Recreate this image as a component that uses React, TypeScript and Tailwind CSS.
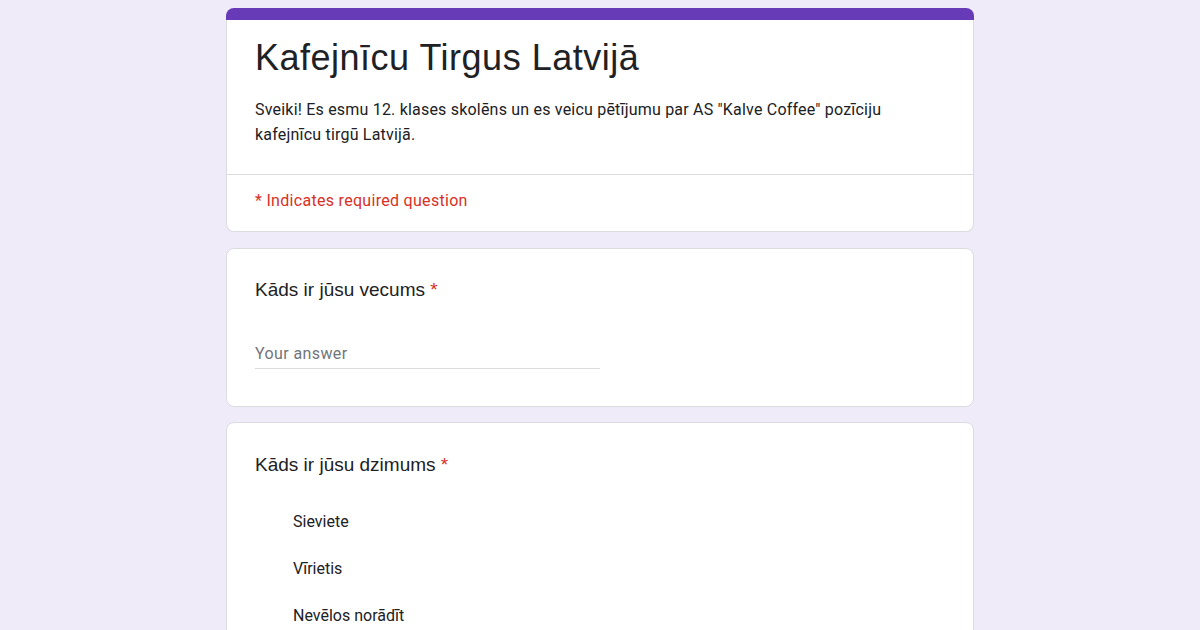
import React from "react";

const roboto = { fontFamily: "Roboto, 'Noto Sans', sans-serif" };

function Card({ children, className = "" }: { children: React.ReactNode; className?: string }) {
  return (
    <div className={"w-[748px] mx-auto bg-white border border-[#dadce0] rounded-lg " + className}>
      {children}
    </div>
  );
}

export default function App() {
  return (
    <div className="w-[1200px] h-[630px] overflow-hidden bg-[#f0ebf8] pt-[8px]">
      {/* Header card */}
      <div className="w-[748px] mx-auto">
        <div className="h-[12px] bg-[#673ab7] rounded-t-lg" />
        <div className="bg-white border-x border-b border-[#dadce0] rounded-b-lg">
          <div className="px-[28px] pt-[18px] pb-[27px]">
            <h1 className="text-[36px] leading-[40px] text-[#202124] tracking-[0.5px] font-['Liberation_Sans',Arial,sans-serif]">
              Kafejnīcu Tirgus Latvijā
            </h1>
            <p className="mt-[19px] text-[16px] leading-[25px] tracking-[0.2px] text-[#202124]" style={roboto}>
              Sveiki! Es esmu 12. klases skolēns un es veicu pētījumu par AS "Kalve Coffee" pozīciju
              <br />
              kafejnīcu tirgū Latvijā.
            </p>
          </div>
          <div className="border-t border-[#dadce0] px-[28px] pt-[16px] pb-[20px]">
            <p className="text-[16px] leading-[20px] tracking-[0.3px] text-[#d93025]" style={roboto}>
              * Indicates required question
            </p>
          </div>
        </div>
      </div>

      {/* Question 1 */}
      <Card className="mt-[16px] px-[28px] pt-[29px] pb-[37px]">
        <div className="text-[19px] leading-[24px] text-[#202124] font-['Liberation_Sans',Arial,sans-serif]">
          Kāds ir jūsu vecums <span className="text-[#d93025]">*</span>
        </div>
        <div className="mt-[40px] w-1/2 border-b border-[#dadce0] pb-[2px]">
          <div className="text-[16px] leading-[24px] tracking-[0.4px] text-[#70757a]" style={roboto}>
            Your answer
          </div>
        </div>
      </Card>

      {/* Question 2 */}
      <Card className="mt-[15px] px-[28px] pt-[30px] pb-[20px]">
        <div className="text-[19px] leading-[24px] text-[#202124] font-['Liberation_Sans',Arial,sans-serif]">
          Kāds ir jūsu dzimums <span className="text-[#d93025]">*</span>
        </div>
        <div className="mt-[21px] flex flex-col">
          {["Sieviete", "Vīrietis", "Nevēlos norādīt"].map((o) => (
            <div key={o} className="h-[47px] flex items-center pl-[38px]">
              <span className="text-[16px] leading-[24px] text-[#202124]" style={roboto}>
                {o}
              </span>
            </div>
          ))}
        </div>
      </Card>
    </div>
  );
}
